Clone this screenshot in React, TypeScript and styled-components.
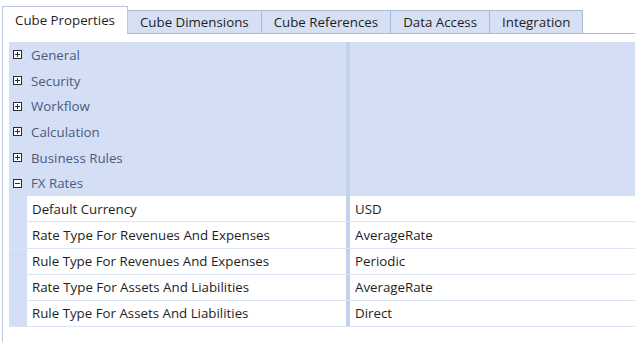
import styled, { createGlobalStyle } from "styled-components";

const GlobalStyle = createGlobalStyle`
  html, body {
    margin: 0;
    padding: 0;
    background: #ffffff;
  }
  body {
    font-family: "Open Sans", "Noto Sans", "Liberation Sans", sans-serif;
    font-size: 13.3px;
    color: #1e1e1e;
    overflow: hidden;
  }
`;

const tabs = ["Cube Properties", "Cube Dimensions", "Cube References", "Data Access", "Integration"];

const groups = ["General", "Security", "Workflow", "Calculation", "Business Rules"];

const fxRows = [
  { label: "Default Currency", value: "USD" },
  { label: "Rate Type For Revenues And Expenses", value: "AverageRate" },
  { label: "Rule Type For Revenues And Expenses", value: "Periodic" },
  { label: "Rate Type For Assets And Liabilities", value: "AverageRate" },
  { label: "Rule Type For Assets And Liabilities", value: "Direct" },
];

function ExpandIcon({ open }: { open?: boolean }) {
  return (
    <svg width="9" height="9" viewBox="0 0 9 9">
      <rect x="0.5" y="0.5" width="8" height="8" fill="#ffffff" stroke="#2b2b2b" />
      <rect x="2" y="4" width="5" height="1" fill="#2b2b2b" />
      {!open && <rect x="4" y="2" width="1" height="5" fill="#2b2b2b" />}
    </svg>
  );
}

export default function App() {
  return (
    <>
      <GlobalStyle />
      <Page>
        <TabStrip>
          {tabs.map((t, i) => (
            <Tab key={t} $active={i === 0}>
              {t}
            </Tab>
          ))}
          <TabFill />
        </TabStrip>
        <Panel>
          <Grid>
            {groups.map((g) => (
              <GroupRow key={g}>
                <GroupCell>
                  <ExpandIcon />
                  <GroupName>{g}</GroupName>
                </GroupCell>
                <Divider />
                <GroupBlank />
              </GroupRow>
            ))}
            <GroupRow>
              <GroupCell>
                <ExpandIcon open />
                <GroupName>FX Rates</GroupName>
              </GroupCell>
              <Divider />
              <GroupBlank />
            </GroupRow>
            {fxRows.map((r) => (
              <PropRow key={r.label}>
                <Indent />
                <LabelCell>{r.label}</LabelCell>
                <Divider />
                <ValueCell>{r.value}</ValueCell>
              </PropRow>
            ))}
          </Grid>
        </Panel>
      </Page>
    </>
  );
}

const Page = styled.div`
  padding: 6px 0 0 2px;
  height: 342px;
  box-sizing: border-box;
  display: flex;
  flex-direction: column;
`;

const TabStrip = styled.div`
  display: flex;
  align-items: flex-end;
  height: 28px;
`;

const Tab = styled.div<{ $active?: boolean }>`
  box-sizing: border-box;
  height: ${(p) => (p.$active ? "28px" : "24px")};
  padding: ${(p) => (p.$active ? "0 12px 2px" : "0 12px")};
  display: flex;
  align-items: center;
  white-space: nowrap;
  font-size: 13.3px;
  color: #1e1e1e;
  background: ${(p) => (p.$active ? "#ffffff" : "#d5e0f4")};
  border: 1px solid ${(p) => (p.$active ? "#b9c6da" : "#a9bbd9")};
  border-bottom: ${(p) => (p.$active ? "none" : "1px solid #a9bbd9")};
  & + & {
    border-left: none;
  }
`;

const TabFill = styled.div`
  flex: 1;
  border-bottom: 1px solid #a9bbd9;
`;

const Panel = styled.div`
  flex: 1;
  border-left: 1px solid #b9c6da;
  padding: 8px 0 0 6px;
`;

const Grid = styled.div`
  display: flex;
  flex-direction: column;
`;

const GroupRow = styled.div`
  display: flex;
  height: 25.7px;
  background: #d4dff5;
`;

const GroupCell = styled.div`
  width: 337px;
  display: flex;
  align-items: center;
  padding-left: 4px;
  box-sizing: border-box;
  gap: 9px;
`;

const GroupName = styled.span`
  color: #4a5b7d;
`;

const GroupBlank = styled.div`
  flex: 1;
`;

const Divider = styled.div`
  width: 4px;
  flex: none;
  background: #c3d1ec;
`;

const PropRow = styled.div`
  display: flex;
  height: 26.2px;
  box-sizing: border-box;
  border-bottom: 1px solid #dbe4f5;
  background: #ffffff;
`;

const Indent = styled.div`
  width: 18px;
  flex: none;
  background: #d4dff5;
`;

const LabelCell = styled.div`
  width: 319px;
  box-sizing: border-box;
  padding-left: 5px;
  display: flex;
  align-items: center;
  white-space: nowrap;
`;

const ValueCell = styled.div`
  flex: 1;
  padding-left: 5px;
  display: flex;
  align-items: center;
  white-space: nowrap;
`;
